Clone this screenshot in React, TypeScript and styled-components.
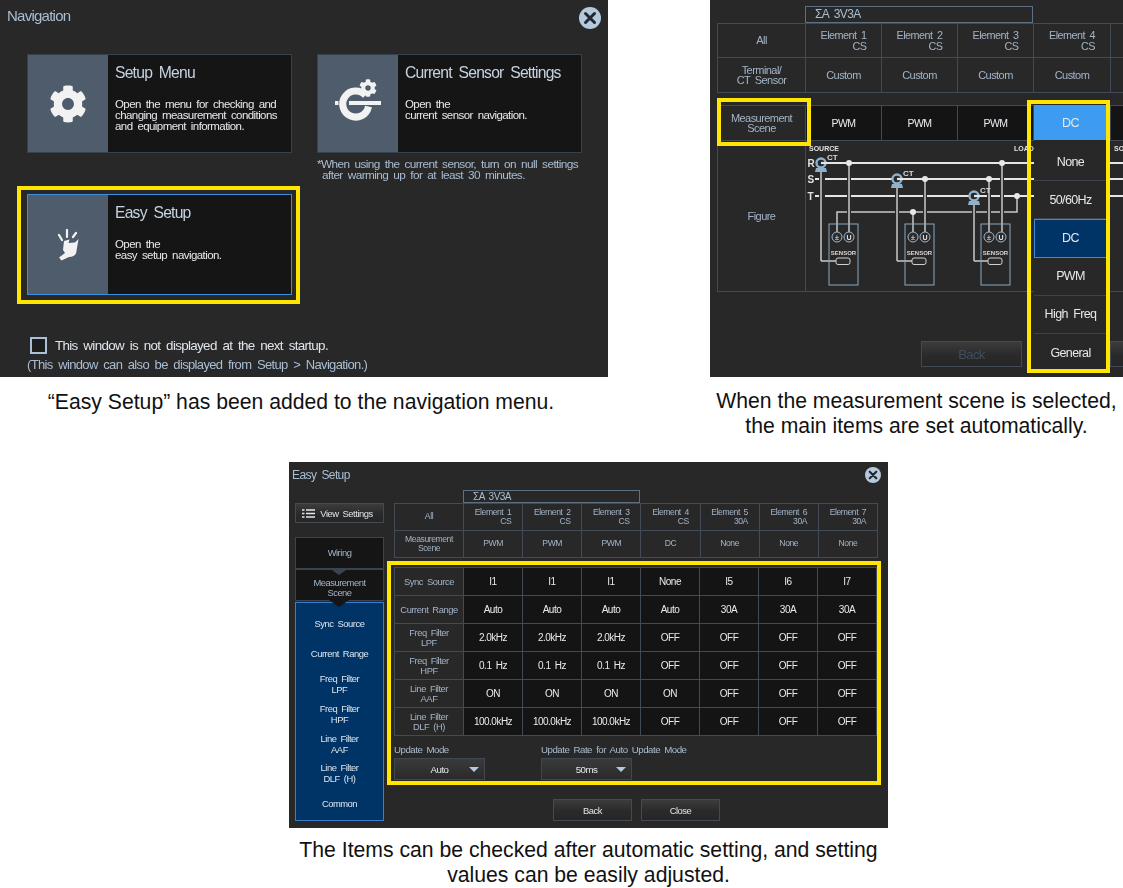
import React from "react";
import styled, { createGlobalStyle, css } from "styled-components";
import { FaCog } from "react-icons/fa";

const Global = createGlobalStyle`
  html, body { margin: 0; background: #fff; }
  * { box-sizing: border-box; }
`;

const screenFont = `"Liberation Sans", Arial, sans-serif`;
const YELLOW = "#ffe600";
const LINE = "#414a56";

const Page = styled.main`
  width: 1123px;
  height: 888px;
  overflow: hidden;
  background: #fff;
  font-family: "Liberation Sans", Arial, sans-serif;
`;
const TopRow = styled.div`
  display: flex;
  justify-content: space-between;
  height: 462px;
`;
const Figure = styled.figure<{ $width: number }>`
  margin: 0;
  width: ${(p) => p.$width}px;
  flex: none;
`;
const Caption = styled.figcaption<{ $top: number; $inset?: number }>`
  margin-top: ${(p) => p.$top}px;
  padding-right: ${(p) => p.$inset ?? 0}px;
  text-align: center;
  font-size: 21.2px;
  line-height: 25px;
  color: #111;
`;
const Window = styled.section<{ $height: number }>`
  position: relative;
  height: ${(p) => p.$height}px;
  overflow: hidden;
  background: #282828;
  color: #e4e8ee;
  font-family: ${screenFont};
  filter: blur(0.3px);
  &, & * {
    letter-spacing: -0.05em;
    word-spacing: 0.2em;
  }
`;
const TitleBar = styled.header<{ $height: number; $size: number; $left: number; $top: number }>`
  height: ${(p) => p.$height}px;
  padding: ${(p) => p.$top}px 3px 0 ${(p) => p.$left}px;
  display: flex;
  justify-content: space-between;
  align-items: flex-start;
  font-size: ${(p) => p.$size}px;
  line-height: 17px;
  color: #a9bdd2;
`;
const CloseDisc = styled.svg`
  flex: none;
  margin-right: 4px;
`;
function CloseButton({ size }: { size: number }) {
  return (
    <CloseDisc width={size} height={size} viewBox="0 0 22 22">
      <circle cx="11" cy="11" r="11" fill="#b5c9de" />
      <path d="M6.5 6.5l9 9M15.5 6.5l-9 9" stroke="#23282e" strokeWidth="3" strokeLinecap="round" />
    </CloseDisc>
  );
}

/* ---- Navigation window ---- */
const NavGrid = styled.div`
  display: grid;
  grid-template-columns: 265px 265px;
  grid-template-rows: 99px 41px 101px;
  column-gap: 25px;
  padding-left: 27px;
`;
const NavCard = styled.article<{ $active?: boolean }>`
  position: relative;
  display: grid;
  grid-template-columns: 80px 1fr;
  background: #151515;
  border: 1px solid ${(p) => (p.$active ? "#3a8fe0" : "#39414c")};
  ${(p) => p.$active && css`grid-row: 3; grid-column: 1;`}
`;
const Highlight = styled.span<{ $t: number; $r: number; $b: number; $l: number }>`
  position: absolute;
  top: ${(p) => p.$t}px;
  right: ${(p) => p.$r}px;
  bottom: ${(p) => p.$b}px;
  left: ${(p) => p.$l}px;
  border: 4px solid ${YELLOW};
  pointer-events: none;
  z-index: 5;
`;
const IconPane = styled.div`
  background: #4f5c6b;
  display: flex;
  align-items: center;
  justify-content: center;
  color: #f2f2f2;
`;
const CardBody = styled.div`
  padding: 9px 0 0 7px;
`;
const CardTitle = styled.h2`
  margin: 0 0 17px;
  font-size: 15.7px;
  line-height: 18px;
  font-weight: 400;
  color: #c6d3e0;
`;
const CardText = styled.p`
  margin: 0;
  font-size: 11.5px;
  line-height: 11px;
  color: #e6e8ec;
  white-space: pre;
`;
const SensorNote = styled.p`
  grid-column: 2;
  grid-row: 2 / 4;
  margin: 0;
  padding-top: 6px;
  font-size: 11.8px;
  line-height: 11px;
  color: #a9bdd2;
  white-space: pre;
`;
const NavFooter = styled.footer`
  padding: 41px 0 0 27px;
  font-size: 13px;
  line-height: 19px;
  color: #a9bdd2;
`;
const CheckRow = styled.label`
  display: flex;
  align-items: center;
  gap: 8px;
  padding-left: 3px;
  font-size: 13.4px;
  color: #dfe5ec;
`;
const CheckBox = styled.span`
  width: 17px;
  height: 17px;
  border: 2.5px solid #a9c0d8;
  background: #1d1d1d;
`;

function HandIcon() {
  return (
    <svg width="24" height="32" viewBox="0 0 24 32">
      <path d="M8 12l-1 9 2 3-6 4.5L5.5 31.5 13 28c4.5 0 7-2 7.5-6L22.500 10l-3.500 3.500-6.500.5 1-3.500z" fill="#f2f2f2" />
      <path d="M3 6l3 5M11 1v7M20 4l-3 4" stroke="#f2f2f2" strokeWidth="2.2" strokeLinecap="round" />
    </svg>
  );
}
function SensorIcon() {
  return (
    <svg width="46" height="50" viewBox="0 0 46 50">
      <g transform="translate(24 0)">
        <FaCog size={18} color="#f2f2f2" />
      </g>
      <path d="M30.5 16.5a13 13 0 1 0 3 11" fill="none" stroke="#f2f2f2" strokeWidth="7" />
      <rect x="14" y="22" width="32" height="4" fill="#f2f2f2" />
      <rect x="0" y="22" width="3.5" height="4" fill="#f2f2f2" />
    </svg>
  );
}

function NavigationWindow() {
  return (
    <Window $height={377}>
      <TitleBar $height={54} $size={15} $left={7} $top={7}>
        Navigation
        <CloseButton size={22} />
      </TitleBar>
      <NavGrid>
        <NavCard>
          <IconPane>
            <FaCog size={38} />
          </IconPane>
          <CardBody>
            <CardTitle>Setup Menu</CardTitle>
            <CardText>{"Open the menu for checking and\nchanging measurement conditions\nand equipment information."}</CardText>
          </CardBody>
        </NavCard>
        <NavCard>
          <IconPane>
            <SensorIcon />
          </IconPane>
          <CardBody>
            <CardTitle>Current Sensor Settings</CardTitle>
            <CardText>{"Open the\ncurrent sensor navigation."}</CardText>
          </CardBody>
        </NavCard>
        <SensorNote>{"*When using the current sensor, turn on null settings\n after warming up for at least 30 minutes."}</SensorNote>
        <NavCard $active>
          <Highlight $t={-9} $r={-9} $b={-10} $l={-11} />
          <IconPane>
            <HandIcon />
          </IconPane>
          <CardBody>
            <CardTitle>Easy Setup</CardTitle>
            <CardText>{"Open the\neasy setup navigation."}</CardText>
          </CardBody>
        </NavCard>
      </NavGrid>
      <NavFooter>
        <CheckRow>
          <CheckBox />
          This window is not displayed at the next startup.
        </CheckRow>
        (This window can also be displayed from Setup &gt; Navigation.)
      </NavFooter>
    </Window>
  );
}

/* ---- Shared table parts ---- */
const DataGrid = styled.div<{ $columns: string; $rows: string }>`
  display: grid;
  grid-template-columns: ${(p) => p.$columns};
  grid-template-rows: ${(p) => p.$rows};
  gap: 1px;
  padding: 1px;
  background: ${LINE};
`;
const Cell = styled.div<{ $tone?: "panel" | "dark"; $size: number; $bright?: boolean }>`
  display: flex;
  align-items: center;
  justify-content: center;
  text-align: center;
  white-space: pre-line;
  background: ${(p) => (p.$tone === "dark" ? "#141414" : "#282828")};
  color: ${(p) => (p.$bright ? "#e8eaee" : "#a3b4c7")};
  font-size: ${(p) => p.$size}px;
  line-height: ${(p) => (p.$size < 10 ? 9.5 : p.$size - 0.5)}px;
`;
const ElementName = styled.span`
  display: inline-flex;
  flex-direction: column;
  align-items: flex-end;
`;
const SigmaBox = styled.div<{ $left: number; $width: number; $height: number; $size: number }>`
  margin-left: ${(p) => p.$left}px;
  width: ${(p) => p.$width}px;
  height: ${(p) => p.$height}px;
  padding-left: 9px;
  border: 1px solid #5d6f82;
  color: #a9bdd2;
  font-size: ${(p) => p.$size}px;
  line-height: ${(p) => p.$height - 2}px;
`;
const Button = styled.button<{ $width: number; $height: number; $size: number; $disabled?: boolean }>`
  flex: none;
  width: ${(p) => p.$width}px;
  height: ${(p) => p.$height}px;
  padding: 0;
  border: 1px solid #424a55;
  background: linear-gradient(#3c3c3c, #2a2a2a 55%, #262626);
  color: ${(p) => (p.$disabled ? "#414e5e" : "#dfe3e8")};
  font-family: ${screenFont};
  font-size: ${(p) => p.$size}px;
`;

/* ---- Scene window ---- */
const SceneBody = styled.div`
  padding: 6px 0 0 7px;
`;
const SceneTables = styled.div`
  width: 470px;
`;
const SceneSpacer = styled.div`
  height: 12px;
`;
const SceneFooter = styled.div`
  display: flex;
  gap: 88px;
  padding: 49px 0 0 204px;
`;
const FigureCell = styled.div`
  grid-column: 2 / -1;
  background: #282828;
  overflow: hidden;
  & svg, & svg * {
    letter-spacing: 0;
    word-spacing: 0;
  }
`;
const SceneMenu = styled.ul`
  position: absolute;
  top: 105px;
  left: 324px;
  width: 73px;
  height: 264px;
  margin: 0;
  padding: 0;
  list-style: none;
  z-index: 3;
  background: #282828;
`;
const SceneOption = styled.li<{ $state?: "head" | "selected" }>`
  display: flex;
  align-items: center;
  justify-content: center;
  height: ${(p) => (p.$state === "head" ? 35 : 38.2)}px;
  font-size: 12.5px;
  color: #e6e8ec;
  border-bottom: 1px solid #3c434d;
  ${(p) => p.$state === "head" && css`background: #3d9bf0; margin-bottom: 3px; border: 0;`}
  ${(p) => p.$state === "selected" && css`background: #003366; border: 1px solid #3a8ae0;`}
`;

function Sensor({ x }: { x: number }) {
  return (
    <g>
      <rect x={x} y="224" width="29" height="61" fill="none" stroke="#8aa8c2" strokeWidth="1" />
      <circle cx={x + 8} cy="237" r="5" fill="#2c2c2c" stroke="#9db8d0" />
      <circle cx={x + 20} cy="237" r="5" fill="#2c2c2c" stroke="#9db8d0" />
      <text x={x + 8} y="240" fontSize="8" fill="#e8e8e8" textAnchor="middle">±</text>
      <text x={x + 20} y="240" fontSize="7" fontWeight="700" fill="#e8e8e8" textAnchor="middle">U</text>
      <text x={x + 14.5} y="255" fontSize="6" fontWeight="700" fill="#d8d8d8" textAnchor="middle">SENSOR</text>
      <rect x={x + 7} y="258" width="14" height="6.5" rx="2" fill="#2c2c2c" stroke="#cfcfcf" />
    </g>
  );
}
function CT({ x, y }: { x: number; y: number }) {
  return (
    <g>
      <path d={`M${x - 5} ${y + 5}h10l1 4h-12z`} fill="#8fb1cc" />
      <circle cx={x} cy={y} r="4.5" fill="#282828" stroke="#8fb1cc" strokeWidth="2.4" />
      <path d={`M${x} ${y}H${x + 6}`} stroke="#e6e6e6" strokeWidth="2.2" />
      <text x={x + 6} y={y - 3} fontSize="8" fontWeight="700" fill="#dcdcdc">CT</text>
    </g>
  );
}
function WiringDiagram() {
  const v = (x: number, y1: number, y2: number) => (
    <g key={`${x}-${y1}`}>
      <path d={`M${x} ${y1}V${y2}`} stroke="#282828" strokeWidth="4" />
      <path d={`M${x} ${y1}V${y2}`} stroke="#c8c8c8" strokeWidth="1.5" fill="none" />
    </g>
  );
  return (
    <svg width="318" height="152" viewBox="806 141 318 152">
      <g fontFamily="Liberation Sans" fontWeight="700" fill="#e2e2e2">
        <text x="809" y="151" fontSize="7">SOURCE</text>
        <text x="1014" y="151" fontSize="7">LOAD</text>
        <text x="1114" y="151" fontSize="7">SO</text>
        <text x="807.5" y="167" fontSize="10">R</text>
        <text x="807.5" y="183" fontSize="10">S</text>
        <text x="807.5" y="200" fontSize="10">T</text>
      </g>
      <g stroke="#e6e6e6" strokeWidth="2.2" fill="none">
        <path d="M827 163H1123" />
        <path d="M815 179h5M825 179H1123" />
        <path d="M815 196h5M825 196H1123" />
      </g>
      <path d="M837 232V212H1017V196" stroke="#c8c8c8" strokeWidth="1.5" fill="none" />
      {v(849, 163, 232)}
      {v(821, 168, 261)}
      {v(897, 184, 261)}
      {v(974, 201, 261)}
      {v(913, 212, 232)}
      {v(925, 179, 232)}
      {v(989, 179, 232)}
      {v(1002, 163, 232)}
      <path d="M821 261h15M897 261h15M974 261h14" stroke="#c8c8c8" strokeWidth="1.5" />
      <Sensor x={829} />
      <Sensor x={905} />
      <Sensor x={981} />
      <CT x={821} y={163} />
      <CT x={897} y={179} />
      <CT x={974} y={196} />
      <g fill="#e8e8e8">
        <circle cx="849" cy="163" r="3" />
        <circle cx="1002" cy="163" r="3" />
        <circle cx="925" cy="179" r="3" />
        <circle cx="989" cy="179" r="3" />
        <circle cx="1017" cy="196" r="3" />
        <circle cx="913" cy="212" r="3" />
      </g>
    </svg>
  );
}

function SceneWindow() {
  const cols = "87px 75px 75px 75px 76px 76px";
  const elems = [1, 2, 3, 4];
  return (
    <Window $height={377}>
      <SceneBody>
        <SigmaBox $left={88} $width={228} $height={17} $size={12}>ΣA 3V3A</SigmaBox>
        <SceneTables>
          <DataGrid $columns={cols} $rows="33px 34px">
            <Cell $size={11}>All</Cell>
            {elems.map((n) => (
              <Cell $size={10.8} key={n}>
                <ElementName>Element {n}<span>CS</span></ElementName>
              </Cell>
            ))}
            <Cell $size={11} />
            <Cell $size={11}>{"Terminal/\nCT Sensor"}</Cell>
            {elems.map((n) => (
              <Cell $size={11} key={n}>Custom</Cell>
            ))}
            <Cell $size={11} />
          </DataGrid>
          <SceneSpacer />
          <DataGrid $columns={cols} $rows="34px 150px">
            <Cell $size={11}>{"Measurement\nScene"}</Cell>
            {[1, 2, 3].map((n) => (
              <Cell $size={10.5} $tone="dark" $bright key={n}>PWM</Cell>
            ))}
            <Cell $size={11} $tone="dark" />
            <Cell $size={11} $tone="dark" />
            <Cell $size={11}>Figure</Cell>
            <FigureCell>
              <WiringDiagram />
            </FigureCell>
          </DataGrid>
        </SceneTables>
        <SceneFooter>
          <Button $width={101} $height={26} $size={13} $disabled>Back</Button>
          <Button $width={101} $height={26} $size={13} />
        </SceneFooter>
      </SceneBody>
      <SceneMenu>
        <SceneOption $state="head">DC</SceneOption>
        <SceneOption>None</SceneOption>
        <SceneOption>50/60Hz</SceneOption>
        <SceneOption $state="selected">DC</SceneOption>
        <SceneOption>PWM</SceneOption>
        <SceneOption>High Freq</SceneOption>
        <SceneOption>General</SceneOption>
      </SceneMenu>
      <Highlight $t={98} $r={312} $b={231} $l={7} />
      <Highlight $t={100} $r={13} $b={4} $l={317} />
    </Window>
  );
}

/* ---- Easy setup window ---- */
const SetupFigure = styled(Figure)`
  margin-left: 289px;
`;
const SetupColumns = styled.div`
  display: grid;
  grid-template-columns: 89px 484px;
  column-gap: 10px;
  padding-left: 6px;
`;
const SideColumn = styled.nav`
  padding-top: 13px;
`;
const ViewSettings = styled(Button)`
  display: flex;
  align-items: center;
  justify-content: center;
  gap: 5px;
  padding-right: 4px;
  margin-bottom: 14px;
`;
const StepTab = styled.div<{ $height: number; $filled?: boolean }>`
  position: relative;
  display: flex;
  align-items: center;
  justify-content: center;
  height: ${(p) => p.$height}px;
  padding-top: ${(p) => (p.$filled ? 5 : 0)}px;
  text-align: center;
  white-space: pre-line;
  background: #151515;
  border: 1px solid #3b434e;
  color: #a3b4c7;
  font-size: 9.4px;
  line-height: 10px;
  &::after {
    content: "";
    position: absolute;
    z-index: 2;
    left: 33px;
    bottom: -7px;
    width: 0;
    height: 0;
    border-left: 10px solid transparent;
    border-right: 10px solid transparent;
    border-top: 7px solid ${(p) => (p.$filled ? "#151515" : "#3b434e")};
  }
`;
const StepList = styled.ul`
  margin: 1px 0 0;
  padding: 6px 0 0;
  height: 219px;
  list-style: none;
  background: #003366;
  border: 1px solid #3a80c8;
  width: 89px;
`;
const StepItem = styled.li`
  height: 29.9px;
  display: flex;
  align-items: center;
  justify-content: center;
  text-align: center;
  white-space: pre-line;
  font-size: 9.4px;
  line-height: 11px;
  color: #dfe6ee;
`;
const MainColumn = styled.div``;
const SettingsFrame = styled.div`
  margin: 3px -3px 0 -7px;
  height: 224px;
  padding: 2px 0 0 3px;
  border: 4px solid ${YELLOW};
`;
const UpdateRow = styled.div`
  display: grid;
  grid-template-columns: 147px 1fr;
  padding-top: 7px;
`;
const UpdateField = styled.div`
  font-size: 9.7px;
  line-height: 13px;
  color: #a9bdd2;
`;
const SelectBox = styled.div`
  position: relative;
  width: 91px;
  height: 22px;
  margin-top: 2px;
  display: flex;
  align-items: center;
  justify-content: center;
  border: 1px solid #3f4750;
  background: linear-gradient(#3a3a3a, #2a2a2a);
  color: #e4e8ee;
  &::after {
    content: "";
    position: absolute;
    right: 5px;
    top: 8px;
    border-left: 5px solid transparent;
    border-right: 5px solid transparent;
    border-top: 5px solid #b5c9de;
  }
`;
const SetupActions = styled.div`
  display: flex;
  gap: 9px;
  padding: 14px 0 0 159px;
`;

const setupRows: [string, string[]][] = [
  ["Sync Source", ["I1", "I1", "I1", "None", "I5", "I6", "I7"]],
  ["Current Range", ["Auto", "Auto", "Auto", "Auto", "30A", "30A", "30A"]],
  ["Freq Filter\nLPF", ["2.0kHz", "2.0kHz", "2.0kHz", "OFF", "OFF", "OFF", "OFF"]],
  ["Freq Filter\nHPF", ["0.1 Hz", "0.1 Hz", "0.1 Hz", "OFF", "OFF", "OFF", "OFF"]],
  ["Line Filter\nAAF", ["ON", "ON", "ON", "ON", "OFF", "OFF", "OFF"]],
  ["Line Filter\nDLF (H)", ["100.0kHz", "100.0kHz", "100.0kHz", "OFF", "OFF", "OFF", "OFF"]],
];
const elements: [number, string, string][] = [
  [1, "CS", "PWM"],
  [2, "CS", "PWM"],
  [3, "CS", "PWM"],
  [4, "CS", "DC"],
  [5, "30A", "None"],
  [6, "30A", "None"],
  [7, "30A", "None"],
];
const steps = [
  "Sync Source",
  "Current Range",
  "Freq Filter\nLPF",
  "Freq Filter\nHPF",
  "Line Filter\nAAF",
  "Line Filter\nDLF (H)",
  "Common",
];

function EasySetupWindow() {
  const cols = "68px repeat(7, 1fr)";
  return (
    <Window $height={366}>
      <TitleBar $height={28} $size={12} $left={3} $top={5}>
        Easy Setup
        <CloseButton size={16} />
      </TitleBar>
      <SetupColumns>
        <SideColumn>
          <ViewSettings $width={89} $height={20} $size={9.4}>
            <svg width="13" height="9" viewBox="0 0 13 9">
              <path d="M0 1h2.500M4 1h9M0 4.5h2.500M4 4.5h9M0 8h2.500M4 8h9" stroke="#e4e8ee" strokeWidth="1.6" />
            </svg>
            View Settings
          </ViewSettings>
          <StepTab $height={32}>Wiring</StepTab>
          <StepTab $height={32} $filled>{"Measurement\nScene"}</StepTab>
          <StepList>
            {steps.map((s) => (
              <StepItem key={s}>{s}</StepItem>
            ))}
          </StepList>
        </SideColumn>
        <MainColumn>
          <SigmaBox $left={69} $width={177} $height={13} $size={10}>ΣA 3V3A</SigmaBox>
          <DataGrid $columns={cols} $rows="26px 26px">
            <Cell $size={8.6}>All</Cell>
            {elements.map(([n, t]) => (
              <Cell $size={8.6} key={n}>
                <ElementName>Element {n}<span>{t}</span></ElementName>
              </Cell>
            ))}
            <Cell $size={8.6}>{"Measurement\nScene"}</Cell>
            {elements.map(([n, , s]) => (
              <Cell $size={8.6} key={n}>{s}</Cell>
            ))}
          </DataGrid>
          <SettingsFrame>
            <DataGrid $columns={cols} $rows="repeat(6, 27px)">
              {setupRows.map(([label, values]) => (
                <React.Fragment key={label}>
                  <Cell $size={9.4}>{label}</Cell>
                  {values.map((v, i) => (
                    <Cell $size={10} $tone="dark" $bright key={i}>{v}</Cell>
                  ))}
                </React.Fragment>
              ))}
            </DataGrid>
            <UpdateRow>
              <UpdateField>
                Update Mode
                <SelectBox>Auto</SelectBox>
              </UpdateField>
              <UpdateField>
                Update Rate for Auto Update Mode
                <SelectBox>50ms</SelectBox>
              </UpdateField>
            </UpdateRow>
          </SettingsFrame>
          <SetupActions>
            <Button $width={79} $height={22} $size={9.4}>Back</Button>
            <Button $width={79} $height={22} $size={9.4}>Close</Button>
          </SetupActions>
        </MainColumn>
      </SetupColumns>
    </Window>
  );
}

export default function App() {
  return (
    <Page>
      <Global />
      <TopRow>
        <Figure $width={608}>
          <NavigationWindow />
          <Caption $top={12} $inset={6}>“Easy Setup” has been added to the navigation menu.</Caption>
        </Figure>
        <Figure $width={413}>
          <SceneWindow />
          <Caption $top={11}>When the measurement scene is selected,<br />the main items are set automatically.</Caption>
        </Figure>
      </TopRow>
      <SetupFigure $width={599}>
        <EasySetupWindow />
        <Caption $top={9}>The Items can be checked after automatic setting, and setting<br />values can be easily adjusted.</Caption>
      </SetupFigure>
    </Page>
  );
}
